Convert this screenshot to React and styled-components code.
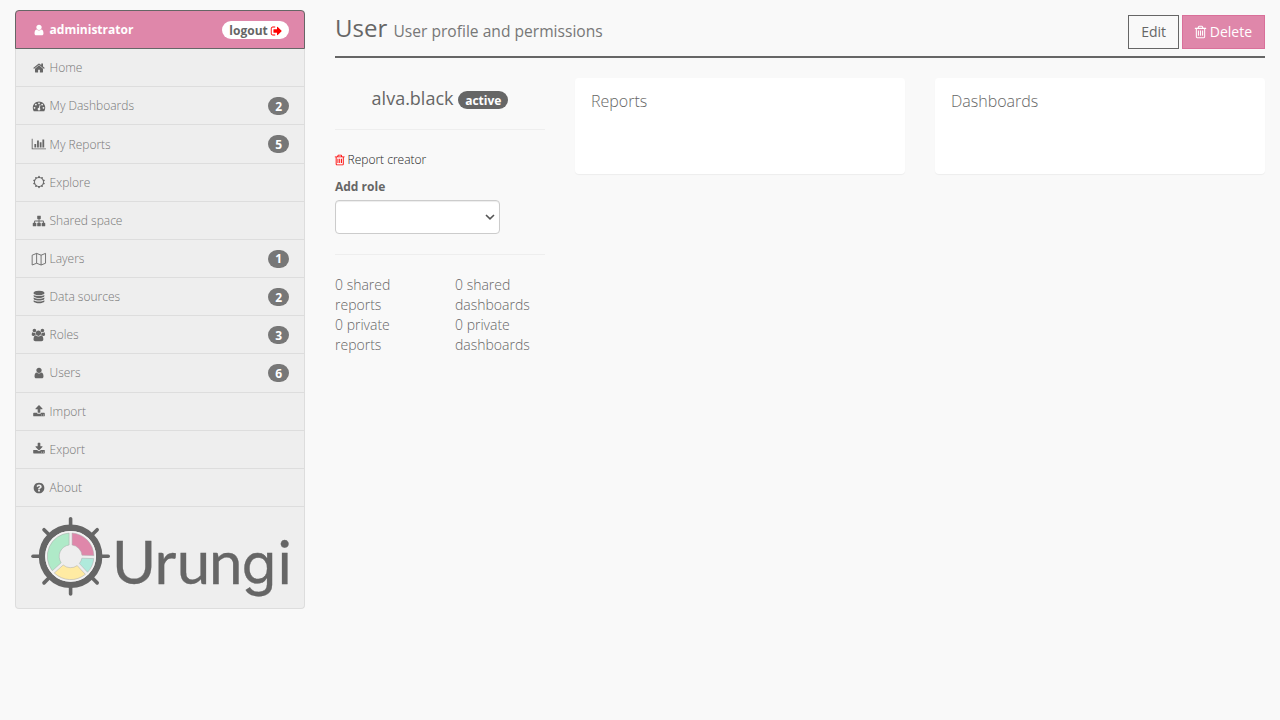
import React from "react";
import styled, { createGlobalStyle, css } from "styled-components";

const GlobalStyle = createGlobalStyle`
  *, *::before, *::after { box-sizing: border-box; }
  body {
    margin: 0;
    background: #f9f9f9;
    color: #666;
    font-family: "Open Sans", sans-serif;
    font-size: 14px;
    font-weight: 300;
    line-height: 1.42857143;
    -webkit-font-smoothing: antialiased;
  }
`;

/* ---------- icons ---------- */

const ICONS = {
  user: { d: "M1536 1399q0 109-62.5 187t-150.5 78h-854q-88 0-150.5-78t-62.5-187q0-85 8.5-160.5t31.5-152 58.5-131 94-89 134.5-34.5q131 128 313 128t313-128q76 0 134.5 34.5t94 89 58.5 131 31.5 152 8.5 160.5zm-256-887q0 159-112.5 271.5t-271.5 112.5-271.5-112.5-112.5-271.5 112.5-271.5 271.5-112.5 271.5 112.5 112.5 271.5z" },
  home: { d: "M1472 992v480q0 26-19 45t-45 19h-384v-384h-256v384h-384q-26 0-45-19t-19-45v-480q0-1 .5-3t.5-3l575-474 575 474q1 2 1 6zm223-69l-62 74q-8 9-21 11h-3q-13 0-21-7l-692-577-692 577q-12 8-24 7-13-2-21-11l-62-74q-8-10-7-23.5t11-21.5l719-599q32-26 76-26t76 26l244 204v-195q0-14 9-23t23-9h192q14 0 23 9t9 23v408l219 182q10 8 11 21.5t-7 23.5z" },
  gauge: { d: "M384 1152q0-53-37.5-90.5t-90.5-37.5-90.5 37.5-37.5 90.5 37.5 90.5 90.5 37.5 90.5-37.5 37.5-90.5zm192-448q0-53-37.5-90.5t-90.5-37.5-90.5 37.5-37.5 90.5 37.5 90.5 90.5 37.5 90.5-37.5 37.5-90.5zm428 481l101-382q6-26-7.5-48.5t-38.5-29.5-48 6.5-30 39.5l-101 382q-60 5-107 43.5t-63 98.5q-20 77 20 146t117 89 146-20 89-117q16-60-6-117t-72-91zm660-33q0-53-37.5-90.5t-90.5-37.5-90.5 37.5-37.5 90.5 37.5 90.5 90.5 37.5 90.5-37.5 37.5-90.5zm-640-640q0-53-37.5-90.5t-90.5-37.5-90.5 37.5-37.5 90.5 37.5 90.5 90.5 37.5 90.5-37.5 37.5-90.5zm448 192q0-53-37.5-90.5t-90.5-37.5-90.5 37.5-37.5 90.5 37.5 90.5 90.5 37.5 90.5-37.5 37.5-90.5zm320 448q0 261-141 483-19 29-54 29h-1402q-35 0-54-29-141-221-141-483 0-182 71-348t191-286 286-191 348-71 348 71 286 191 191 286 71 348z" },
  chart: { w: 2048, d: "M640 896v512h-256v-512h256zm384-512v1024h-256v-1024h256zm1024 1152v128h-2048v-1536h128v1408h1920zm-640-896v768h-256v-768h256zm384-384v1152h-256v-1152h256z" },
  sun: { d: "M1472 896q0-117-45.5-223.5t-123-184-184-123-223.5-45.5-223.5 45.5-184 123-123 184-45.5 223.5 45.5 223.5 123 184 184 123 223.5 45.5 223.5-45.5 184-123 123-184 45.5-223.5zm276 277q-4 15-20 20l-292 96v306q0 16-13 26-15 10-29 4l-292-94-180 248q-10 13-26 13t-26-13l-180-248-292 94q-14 6-29-4-13-10-13-26v-306l-292-96q-16-5-20-20-5-17 4-29l180-248-180-248q-9-13-4-29 4-15 20-20l292-96v-306q0-16 13-26 15-10 29-4l292 94 180-248q9-12 26-12t26 12l180 248 292-94q14-6 29 4 13 10 13 26v306l292 96q16 5 20 20 5 16-4 29l-180 248 180 248q9 12 4 29z" },
  sitemap: { d: "M1792 1248v320q0 40-28 68t-68 28h-320q-40 0-68-28t-28-68v-320q0-40 28-68t68-28h96v-192h-512v192h96q40 0 68 28t28 68v320q0 40-28 68t-68 28h-320q-40 0-68-28t-28-68v-320q0-40 28-68t68-28h96v-192h-512v192h96q40 0 68 28t28 68v320q0 40-28 68t-68 28h-320q-40 0-68-28t-28-68v-320q0-40 28-68t68-28h96v-192q0-52 38-90t90-38h512v-192h-96q-40 0-68-28t-28-68v-320q0-40 28-68t68-28h320q40 0 68 28t28 68v320q0 40-28 68t-68 28h-96v192h512q52 0 90 38t38 90v192h96q40 0 68 28t28 68z" },
  map: { w: 2048, stroke: true, d: "M64 346L704 90L1344 346L1984 90V1506L1344 1762L704 1506L64 1762ZM704 90V1506M1344 346V1762" },
  database: { d: "M896 768q237 0 443-43t325-127v170q0 69-103 128t-280 93.5-385 34.5-385-34.5-280-93.5-103-128v-170q119 84 325 127t443 43zm0 768q237 0 443-43t325-127v170q0 69-103 128t-280 93.5-385 34.5-385-34.5-280-93.5-103-128v-170q119 84 325 127t443 43zm0-384q237 0 443-43t325-127v170q0 69-103 128t-280 93.5-385 34.5-385-34.5-280-93.5-103-128v-170q119 84 325 127t443 43zm0-1152q208 0 385 34.5t280 93.5 103 128v128q0 69-103 128t-280 93.5-385 34.5-385-34.5-280-93.5-103-128v-128q0-69 103-128t280-93.5 385-34.5z" },
  users: { x: -64, w: 1920, d: "M529 896q-162 5-265 128h-134q-82 0-138-40.5t-56-118.5q0-353 124-353 6 0 43.5 21t97.5 42.5 119 21.5q67 0 133-23-5 37-5 66 0 139 81 256zm1071 637q0 120-73 189.5t-194 69.5h-874q-121 0-194-69.5t-73-189.5q0-53 3.5-103.5t14-109 26.5-108.5 43-97.5 62-81 85.5-53.5 111.5-20q10 0 43 21.5t73 48 107 48 135 21.5 135-21.5 107-48 73-48 43-21.5q61 0 111.5 20t85.5 53.5 62 81 43 97.5 26.5 108.5 14 109 3.5 103.5zm-1024-1277q0 106-75 181t-181 75-181-75-75-181 75-181 181-75 181 75 75 181zm704 384q0 159-112.5 271.5t-271.5 112.5-271.5-112.5-112.5-271.5 112.5-271.5 271.5-112.5 271.5 112.5 112.5 271.5zm576 225q0 78-56 118.5t-138 40.5h-134q-103-123-265-128 81-117 81-256 0-29-5-66 66 23 133 23 59 0 119-21.5t97.5-42.5 43.5-21q124 0 124 353zm-128-609q0 106-75 181t-181 75-181-75-75-181 75-181 181-75 181 75 75 181z" },
  upload: { d: "M1344 1472q0-26-19-45t-45-19-45 19-19 45 19 45 45 19 45-19 19-45zm256 0q0-26-19-45t-45-19-45 19-19 45 19 45 45 19 45-19 19-45zm128-224v320q0 40-28 68t-68 28h-1472q-40 0-68-28t-28-68v-320q0-40 28-68t68-28h427q21 56 70.5 92t110.5 36h256q61 0 110.5-36t70.5-92h427q40 0 68 28t28 68zm-325-648q-17 40-59 40h-256v448q0 26-19 45t-45 19h-256q-26 0-45-19t-19-45v-448h-256q-42 0-59-40-17-39 14-69l448-448q18-19 45-19t45 19l448 448q31 30 14 69z" },
  download: { d: "M1344 1344q0-26-19-45t-45-19-45 19-19 45 19 45 45 19 45-19 19-45zm256 0q0-26-19-45t-45-19-45 19-19 45 19 45 45 19 45-19 19-45zm128-224v320q0 40-28 68t-68 28h-1472q-40 0-68-28t-28-68v-320q0-40 28-68t68-28h465l135 136q58 56 136 56t136-56l136-136h464q40 0 68 28t28 68zm-325-569q17 41-14 70l-448 448q-18 19-45 19t-45-19l-448-448q-31-29-14-70 17-39 59-39h256v-448q0-26 19-45t45-19h256q26 0 45 19t19 45v448h256q42 0 59 39z" },
  question: { d: "M1024 1376v-192q0-14-9-23t-23-9h-192q-14 0-23 9t-9 23v192q0 14 9 23t23 9h192q14 0 23-9t9-23zm256-672q0-88-55.5-163t-138.5-116-170-41q-243 0-371 213-15 24 8 42l132 100q7 6 19 6 16 0 25-12 53-68 86-92 34-24 86-24 48 0 85.5 26t37.5 59q0 38-20 61t-68 45q-63 28-115.5 86.5t-52.5 125.5v36q0 14 9 23t23 9h192q14 0 23-9t9-23q0-19 21.5-49.5t54.5-49.5q32-18 49-28.5t46-35 44.5-48 28-60.5 12.5-81zm384 192q0 209-103 385.5t-279.5 279.5-385.5 103-385.5-103-279.5-279.5-103-385.5 103-385.5 279.5-279.5 385.5-103 385.5 103 279.5 279.5 103 385.5z" },
  trash: { x: 192, w: 1408, d: "M704 736v576q0 14-9 23t-23 9h-64q-14 0-23-9t-9-23v-576q0-14 9-23t23-9h64q14 0 23 9t9 23zm256 0v576q0 14-9 23t-23 9h-64q-14 0-23-9t-9-23v-576q0-14 9-23t23-9h64q14 0 23 9t9 23zm256 0v576q0 14-9 23t-23 9h-64q-14 0-23-9t-9-23v-576q0-14 9-23t23-9h64q14 0 23 9t9 23zm128 724v-948h-896v948q0 22 7 40.5t14.5 27 10.5 8.5h832q3 0 10.5-8.5t14.5-27 7-40.5zm-672-1076h448l-48-117q-7-9-17-11h-317q-10 2-17 11zm928 32v64q0 14-9 23t-23 9h-96v948q0 83-47 143.5t-113 60.5h-832q-66 0-113-58.5t-47-141.5v-952h-96q-14 0-23-9t-9-23v-64q0-14 9-23t23-9h309l70-167q15-37 54-63t79-26h320q40 0 79 26t54 63l70 167h309q14 0 23 9t9 23z" },
  signOut: { x: 64, w: 1664, d: "M704 1440q0 4 1 20t.5 26.5-3 23.5-10 19.5-20.5 6.5h-320q-119 0-203.5-84.5t-84.5-203.5v-704q0-119 84.5-203.5t203.5-84.5h320q13 0 22.5 9.5t9.5 22.5q0 4 1 20t.5 26.5-3 23.5-10 19.5-20.5 6.5h-320q-66 0-113 47t-47 113v704q0 66 47 113t113 47h312l11.5 1 11.5 3 8 5.5 7 9 2 13.5zm928-544q0 26-19 45l-544 544q-19 19-45 19t-45-19-19-45v-288h-448q-26 0-45-19t-19-45v-384q0-26 19-45t45-19h448v-288q0-26 19-45t45-19 45 19l544 544q19 19 19 45z" },
};

const Glyph = styled.svg`
  width: ${(p) => p.$w / 1792}em;
  height: 1em;
  vertical-align: -0.143em;
  overflow: visible;
  color: ${(p) => p.$color || "inherit"};
  transform: scale(1.04);
`;

function Icon({ name, color }) {
  const { d, x = 0, w = 1792, stroke } = ICONS[name];
  return (
    <Glyph $w={w} $color={color} viewBox={`${x} 0 ${w} 1792`} aria-hidden="true">
      {stroke ? (
        <path d={d} fill="none" stroke="currentColor" strokeWidth="128" strokeLinejoin="round" />
      ) : (
        <path d={d} fill="currentColor" />
      )}
    </Glyph>
  );
}

/* ---------- layout ---------- */

const Page = styled.div`
  display: flex;
  align-items: flex-start;
  gap: 30px;
  padding: 10px 15px;
`;

const Sidebar = styled.nav`
  flex: 0 0 290px;
  border: 1px solid #ddd;
  border-top: 0;
  border-radius: 4px;
  background: #eee;
  font-size: 12px;
`;

const rowBase = css`
  display: flex;
  align-items: flex-start;
  justify-content: space-between;
  padding: 10px 15px;
`;

const AccountRow = styled.div`
  ${rowBase}
  height: 39.15px;
  margin: 0 -1px;
  border: 1px solid #666;
  border-radius: 4px 4px 0 0;
  background: #df87aa;
  color: #fff;
  font-weight: 700;
`;

const NavRow = styled.a`
  ${rowBase}
  height: 38.16px;
  border-bottom: 1px solid #ddd;
`;

const NavLabel = styled.span`
  padding-top: 0.05px;
  color: ${(p) => (p.$strong ? "#fff" : "#777")};
`;

const IconSlot = styled.span`
  display: inline-block;
  width: 1.28571429em;
  color: ${(p) => (p.$strong ? "#fff" : "#666")};
  text-align: center;
`;

const Badge = styled.span`
  display: inline-block;
  min-width: 10px;
  padding: 3.5px 7px 2.5px;
  border-radius: 10px;
  background: ${(p) => p.$bg || "#777"};
  color: ${(p) => p.$fg || "#fff"};
  font-size: 12px;
  font-weight: 700;
  line-height: 1;
  text-align: center;
  white-space: nowrap;
  vertical-align: middle;
`;

const LogoRow = styled.div`
  padding: 10px 15px;
`;

const LogoSvg = styled.svg`
  display: block;
  width: 258px;
  height: 81px;
  overflow: visible;
`;

const Main = styled.main`
  flex: 1;
  min-width: 0;
`;

const Header = styled.header`
  display: flex;
  align-items: flex-start;
  justify-content: space-between;
  height: 48px;
  padding-top: 5px;
  border-bottom: 2px solid #666;
`;

const Title = styled.h1`
  margin: 0;
  font-size: 24px;
  font-weight: 400;
  line-height: 26px;
`;

const Subtitle = styled.small`
  color: #777;
  font-size: 65%;
`;

const Actions = styled.div`
  display: flex;
  gap: 3px;
`;

const Button = styled.button`
  padding: 6px 12px;
  border: 1px solid ${(p) => (p.$danger ? "#d9709a" : "#666")};
  background: ${(p) => (p.$danger ? "#df87aa" : "transparent")};
  color: ${(p) => (p.$danger ? "#fff" : "#666")};
  font: 400 14px/20px "Open Sans", sans-serif;
`;

const Columns = styled.div`
  display: grid;
  grid-template-columns: 210px 1fr 1fr;
  align-items: start;
  gap: 30px;
  margin-top: 20px;
`;

const UserName = styled.h3`
  margin: 10px 0;
  font-size: 18px;
  font-weight: 400;
  line-height: 20px;
  text-align: center;
`;

const Divider = styled.hr`
  margin: 20px 0;
  border: 0;
  border-top: 1px solid #eee;
`;

const RoleItem = styled.div`
  color: #222;
  font-size: 12px;
  line-height: 20px;
`;

const FieldLabel = styled.label`
  display: block;
  margin: 8px 0 5px;
  font-size: 12px;
  font-weight: 700;
  line-height: 17px;
`;

const SelectField = styled.div`
  display: grid;
  align-items: center;
  width: 165px;

  > * {
    grid-area: 1 / 1;
  }
`;

const Select = styled.select`
  width: 100%;
  height: 34px;
  padding: 6px 12px;
  border: 1px solid #ccc;
  border-radius: 4px;
  appearance: none;
  background: #fff;
  box-shadow: inset 0 1px 1px rgba(0, 0, 0, 0.075);
  color: #555;
  font: 14px "Open Sans", sans-serif;
`;

const Chevron = styled.svg`
  justify-self: end;
  width: 10px;
  height: 6px;
  margin-right: 5px;
  pointer-events: none;
`;

const Stats = styled.div`
  display: grid;
  grid-template-columns: 90px 90px;
  gap: 0 30px;
`;

const Card = styled.section`
  height: 96px;
  padding: 13px 16px;
  border-radius: 4px;
  background: #fff;
  box-shadow: 0 1px 1px rgba(0, 0, 0, 0.05);
`;

const CardTitle = styled.h4`
  margin: 0;
  color: #666;
  font-size: 16px;
  font-weight: 300;
  line-height: 20px;
`;

/* ---------- logo ---------- */

function segment(from, to) {
  const outer = 23.3;
  const inner = 11.4;
  const at = (r, deg, side) => {
    const a = (deg * Math.PI) / 180 + side * Math.asin(1.5 / r);
    return `${(r * Math.sin(a)).toFixed(2)} ${(-r * Math.cos(a)).toFixed(2)}`;
  };
  const large = to - from > 180 ? 1 : 0;
  return `M${at(outer, from, 1)}A${outer} ${outer} 0 ${large} 1 ${at(outer, to, -1)}L${at(inner, to, -1)}A${inner} ${inner} 0 ${large} 0 ${at(inner, from, 1)}Z`;
}

const SEGMENTS = [
  [0, 92, "#df87aa"],
  [92, 137, "#afeadc"],
  [137, 228, "#ffeba3"],
  [228, 360, "#afeac8"],
];

function Logo() {
  return (
    <LogoSvg viewBox="0 0 258 81" role="img" aria-label="Urungi">
      <g transform="translate(39.6 39.3)">
        {[0, 45, 90, 135, 180, 225, 270, 315].map((a) => (
          <path key={a} d="M0 -29V-37.6" transform={`rotate(${a})`} stroke="#666" strokeWidth="3.6" strokeLinecap="round" />
        ))}
        <circle r="28.6" fill="none" stroke="#666" strokeWidth="6.4" />
        <circle r="24.6" fill="none" stroke="#f3f3f3" strokeWidth="1.6" />
        {SEGMENTS.map(([from, to, fill]) => (
          <path key={from} d={segment(from, to)} fill={fill} stroke="#aaa" strokeWidth="0.5" />
        ))}
      </g>
      <g fill="#666" stroke="#666" strokeWidth="0.3" fontFamily="Lato, sans-serif" fontSize="60" fontWeight="400">
        <text y="66.5" x="81 123.5 145.8 178">Urun</text>
        <text y="67" x="210.5" fontFamily="Inter, sans-serif" fontSize="57">g</text>
        <text y="66.5" x="246.5">i</text>
      </g>
    </LogoSvg>
  );
}

/* ---------- page ---------- */

const NAV = [
  ["home", "Home"],
  ["gauge", "My Dashboards", 2],
  ["chart", "My Reports", 5],
  ["sun", "Explore"],
  ["sitemap", "Shared space"],
  ["map", "Layers", 1],
  ["database", "Data sources", 2],
  ["users", "Roles", 3],
  ["user", "Users", 6],
  ["upload", "Import"],
  ["download", "Export"],
  ["question", "About"],
];

export default function App() {
  return (
    <>
      <GlobalStyle />
      <Page>
        <Sidebar>
          <AccountRow>
            <NavLabel $strong>
              <IconSlot $strong><Icon name="user" /></IconSlot> administrator
            </NavLabel>
            <Badge $bg="#fff" $fg="#666">
              logout <Icon name="signOut" color="#f00" />
            </Badge>
          </AccountRow>
          {NAV.map(([icon, label, count]) => (
            <NavRow key={label}>
              <NavLabel>
                <IconSlot><Icon name={icon} /></IconSlot> {label}
              </NavLabel>
              {count && <Badge>{count}</Badge>}
            </NavRow>
          ))}
          <LogoRow><Logo /></LogoRow>
        </Sidebar>
        <Main>
          <Header>
            <Title>User <Subtitle>User profile and permissions</Subtitle></Title>
            <Actions>
              <Button>Edit</Button>
              <Button $danger><Icon name="trash" /> Delete</Button>
            </Actions>
          </Header>
          <Columns>
            <section>
              <UserName>alva.black <Badge $bg="#666">active</Badge></UserName>
              <Divider />
              <RoleItem><Icon name="trash" color="#f00" /> Report creator</RoleItem>
              <FieldLabel htmlFor="role">Add role</FieldLabel>
              <SelectField>
                <Select id="role" />
                <Chevron viewBox="0 0 10 6">
                  <path d="M1 1L5 4.8L9 1" fill="none" stroke="#555" strokeWidth="1.6" />
                </Chevron>
              </SelectField>
              <Divider />
              <Stats>
                <div>0 shared reports</div>
                <div>0 shared dashboards</div>
                <div>0 private reports</div>
                <div>0 private dashboards</div>
              </Stats>
            </section>
            <Card><CardTitle>Reports</CardTitle></Card>
            <Card><CardTitle>Dashboards</CardTitle></Card>
          </Columns>
        </Main>
      </Page>
    </>
  );
}
